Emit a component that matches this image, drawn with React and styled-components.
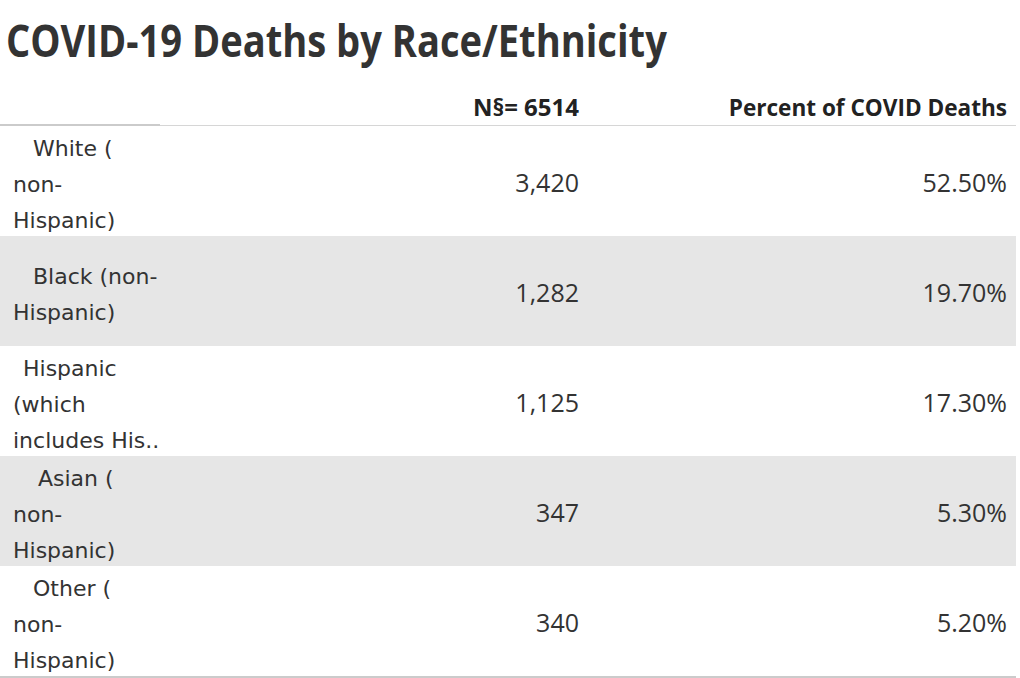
import React from 'react';
import styled, { createGlobalStyle } from 'styled-components';

const GlobalStyle = createGlobalStyle`
  html, body {
    margin: 0;
    padding: 0;
    background: #ffffff;
  }
  body {
    font-family: "Open Sans", "Liberation Sans", sans-serif;
    color: #333333;
  }
`;

const Page = styled.div`
  width: 1020px;
  height: 678px;
  overflow: hidden;
  background: #ffffff;
`;

const Title = styled.h1`
  margin: 0;
  padding: 18px 0 0 6px;
  height: 62px;
  box-sizing: border-box;
  font-family: "Open Sans", "Liberation Sans", sans-serif;
  font-weight: 700;
  font-size: 44px;
  line-height: 44px;
  color: #333333;
  white-space: nowrap;
`;

// the dashboard font is a semi-condensed face, so narrow the glyphs
const Squeeze = styled.span`
  display: inline-block;
  transform: scaleX(${p => p.$x});
  transform-origin: ${p => p.$origin || 'left'} center;
`;

const Table = styled.div`
  width: 1016px;
  display: grid;
  grid-template-columns: 160px 428px 428px;
  border-bottom: 2px solid #cbcbcb;
`;

const HeadCell = styled.div`
  height: 64px;
  box-sizing: border-box;
  display: flex;
  align-items: flex-end;
  justify-content: flex-end;
  padding: 0 9px 6px 0;
  border-bottom: ${p => (p.$stub ? '2px solid #cbcbcb' : '1px solid #d6d6d6')};
  font-family: "Open Sans", "Liberation Sans", sans-serif;
  font-weight: 700;
  font-size: 24px;
  line-height: 24px;
  color: #222222;
  white-space: nowrap;
`;

const Row = styled.div`
  display: contents;
`;

const LabelCell = styled.div`
  height: 110px;
  box-sizing: border-box;
  display: flex;
  flex-direction: column;
  justify-content: center;
  padding: 8px 0 0 13px;
  background: ${p => (p.$shaded ? '#e6e6e6' : '#ffffff')};
  font-family: "DejaVu Sans", "Verdana", sans-serif;
  font-size: 22px;
  line-height: 36px;
  color: #333333;
  white-space: nowrap;
`;

const LabelLine = styled.span`
  display: block;
  padding-left: ${p => p.$indent || 0}px;
`;

const NumCell = styled.div`
  height: 110px;
  box-sizing: border-box;
  display: flex;
  align-items: center;
  justify-content: flex-end;
  padding: 2px 9px 0 0;
  background: ${p => (p.$shaded ? '#e6e6e6' : '#ffffff')};
  font-family: "Open Sans", "Liberation Sans", sans-serif;
  font-size: 25px;
  line-height: 25px;
  color: #333333;
`;

const rows = [
  { lines: [['White (', 20], ['non-', 0], ['Hispanic)', 0]], n: '3,420', pct: '52.50%' },
  { lines: [['Black (non-', 20], ['Hispanic)', 0]], n: '1,282', pct: '19.70%' },
  { lines: [['Hispanic', 10], ['(which', 0], ['includes His..', 0]], n: '1,125', pct: '17.30%' },
  { lines: [['Asian (', 25], ['non-', 0], ['Hispanic)', 0]], n: '347', pct: '5.30%' },
  { lines: [['Other (', 20], ['non-', 0], ['Hispanic)', 0]], n: '340', pct: '5.20%' },
];

export default function App() {
  return (
    <Page>
      <GlobalStyle />
      <Title>
        <Squeeze $x={0.866}>COVID-19 Deaths by Race/Ethnicity</Squeeze>
      </Title>
      <Table>
        <HeadCell $stub />
        <HeadCell>N§= 6514</HeadCell>
        <HeadCell>
          <Squeeze $x={0.94} $origin="right">Percent of COVID Deaths</Squeeze>
        </HeadCell>
        {rows.map((r, i) => {
          const shaded = i % 2 === 1;
          return (
            <Row key={i}>
              <LabelCell $shaded={shaded}>
                {r.lines.map(([t, indent], j) => (
                  <LabelLine key={j} $indent={indent}>{t}</LabelLine>
                ))}
              </LabelCell>
              <NumCell $shaded={shaded}>{r.n}</NumCell>
              <NumCell $shaded={shaded}>{r.pct}</NumCell>
            </Row>
          );
        })}
      </Table>
    </Page>
  );
}
